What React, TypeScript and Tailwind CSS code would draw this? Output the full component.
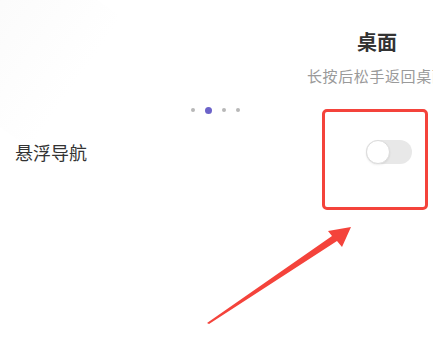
export default function App() {
  const dots = [false, true, false, false];

  return (
    <div
      className="relative w-[433px] h-[360px] overflow-hidden bg-white"
      style={{ fontFamily: '"Noto Sans CJK SC", "Noto Sans", sans-serif' }}
    >
      <div className="absolute -left-[60px] -top-[40px] w-[150px] h-[160px] rotate-[35deg] bg-gradient-to-r from-[#f7f7f7] to-white opacity-70" />

      <div className="relative flex flex-col">
        <div className="flex flex-col pl-[307px] pt-[29px] whitespace-nowrap">
          <div className="pl-[50px] text-[20px] leading-[26px] font-bold text-[#333]">桌面</div>
          <div className="mt-[11px] text-[15px] leading-[20px] text-[#9a9a9a] tracking-[0.6px]">长按后松手返回桌面</div>
        </div>

        <div className="flex items-center gap-[10px] pl-[191px] mt-[19px] h-[10px]">
          {dots.map((active, i) =>
            active ? (
              <span key={i} className="w-[7px] h-[7px] rounded-full bg-[#6c63c9]" />
            ) : (
              <span key={i} className="w-[4px] h-[4px] rounded-full bg-[#b8b8b8]" />
            )
          )}
        </div>

        <div className="flex items-center justify-between mt-[24px] pl-[15px] pr-[21px] h-[26px]">
          <span className="text-[18px] text-[#333]">悬浮导航</span>
          <div className="relative w-[46px] h-[24px] rounded-full bg-[#e8e8e8]">
            <span className="absolute left-0 top-0 w-[24px] h-[24px] rounded-full bg-white border border-[#dcdcdc] shadow-[0_1px_2px_rgba(0,0,0,0.08)]" />
          </div>
        </div>
      </div>

      <div className="absolute left-[322px] top-[109px] w-[106px] h-[101px] border-[3px] border-[#f4433b] rounded-[5px]" />

      <svg className="absolute left-0 top-0" width="433" height="360" viewBox="0 0 433 360">
        <path d="M207 323 L332 236 L328 231 L351 227 L342 247 L337 241 L209 324 Z" fill="#f4433b" />
      </svg>
    </div>
  );
}
